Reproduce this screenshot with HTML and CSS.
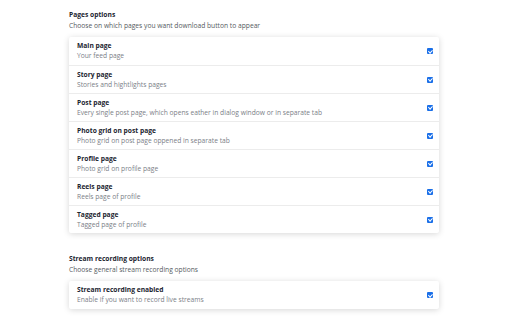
FILE: index.html
```html
<!DOCTYPE html>
<html lang="en">
  <head>
    <meta charset="UTF-8" />
    <meta name="viewport" content="width=device-width, initial-scale=1.0" />
    <title>Options</title>
    <link rel="stylesheet" href="styles.css">
  </head>
  <body>
    <div class="page">
      <section class="group">
        <h2>Pages options</h2>
        <p class="hint">Choose on which pages you want download button to appear</p>
        <div class="card">
          <div class="row">
            <div class="text">
              <div class="name">Main page</div>
              <div class="desc">Your feed page</div>
            </div>
            <span class="check"></span>
          </div>
          <div class="row">
            <div class="text">
              <div class="name">Story page</div>
              <div class="desc">Stories and hightlights pages</div>
            </div>
            <span class="check"></span>
          </div>
          <div class="row">
            <div class="text">
              <div class="name">Post page</div>
              <div class="desc">Every single post page, which opens eather in dialog window or in separate tab</div>
            </div>
            <span class="check"></span>
          </div>
          <div class="row">
            <div class="text">
              <div class="name">Photo grid on post page</div>
              <div class="desc">Photo grid on post page oppened in separate tab</div>
            </div>
            <span class="check"></span>
          </div>
          <div class="row">
            <div class="text">
              <div class="name">Profile page</div>
              <div class="desc">Photo grid on profile page</div>
            </div>
            <span class="check"></span>
          </div>
          <div class="row">
            <div class="text">
              <div class="name">Reels page</div>
              <div class="desc">Reels page of profile</div>
            </div>
            <span class="check"></span>
          </div>
          <div class="row">
            <div class="text">
              <div class="name">Tagged page</div>
              <div class="desc">Tagged page of profile</div>
            </div>
            <span class="check"></span>
          </div>
        </div>
      </section>

      <section class="group">
        <h2>Stream recording options</h2>
        <p class="hint">Choose general stream recording options</p>
        <div class="card">
          <div class="row">
            <div class="text">
              <div class="name">Stream recording enabled</div>
              <div class="desc">Enable if you want to record live streams</div>
            </div>
            <span class="check"></span>
          </div>
        </div>
      </section>
    </div>
  </body>
</html>
```

FILE: styles.css
```css
* {
  margin: 0;
  padding: 0;
  box-sizing: border-box;
}

body {
  font-family: "Open Sans", "Noto Sans", sans-serif;
  background-color: #ffffff;
  color: #202124;
  font-size: 6.7px;
}

.page {
  width: 370px;
  margin-left: 69px;
  padding-top: 10px;
}

.group {
  margin-bottom: 21px;
}

h2 {
  font-size: 6.7px;
  font-weight: 700;
  line-height: 10px;
  color: #1b2430;
}

.hint {
  line-height: 11px;
  color: #555b61;
  margin-bottom: 6px;
}

.card {
  background-color: #fff;
  border-radius: 2px;
  box-shadow: 0 1px 6px rgba(0, 0, 0, 0.16);
}

.row {
  display: flex;
  align-items: center;
  justify-content: space-between;
  height: 28px;
  padding: 0 6px 0 8px;
  border-top: 1px solid #ececec;
}

.row:first-child {
  border-top: none;
}

.name {
  font-weight: 700;
  line-height: 10px;
  color: #1b2430;
}

.desc {
  line-height: 10px;
  color: #7b8087;
}

.check {
  width: 6px;
  height: 6px;
  border-radius: 1px;
  background-color: #1a6fe8;
  position: relative;
}

.check::after {
  content: "";
  position: absolute;
  left: 2px;
  top: 0.5px;
  width: 1.5px;
  height: 3px;
  border: solid #fff;
  border-width: 0 1px 1px 0;
  transform: rotate(45deg);
}
```
